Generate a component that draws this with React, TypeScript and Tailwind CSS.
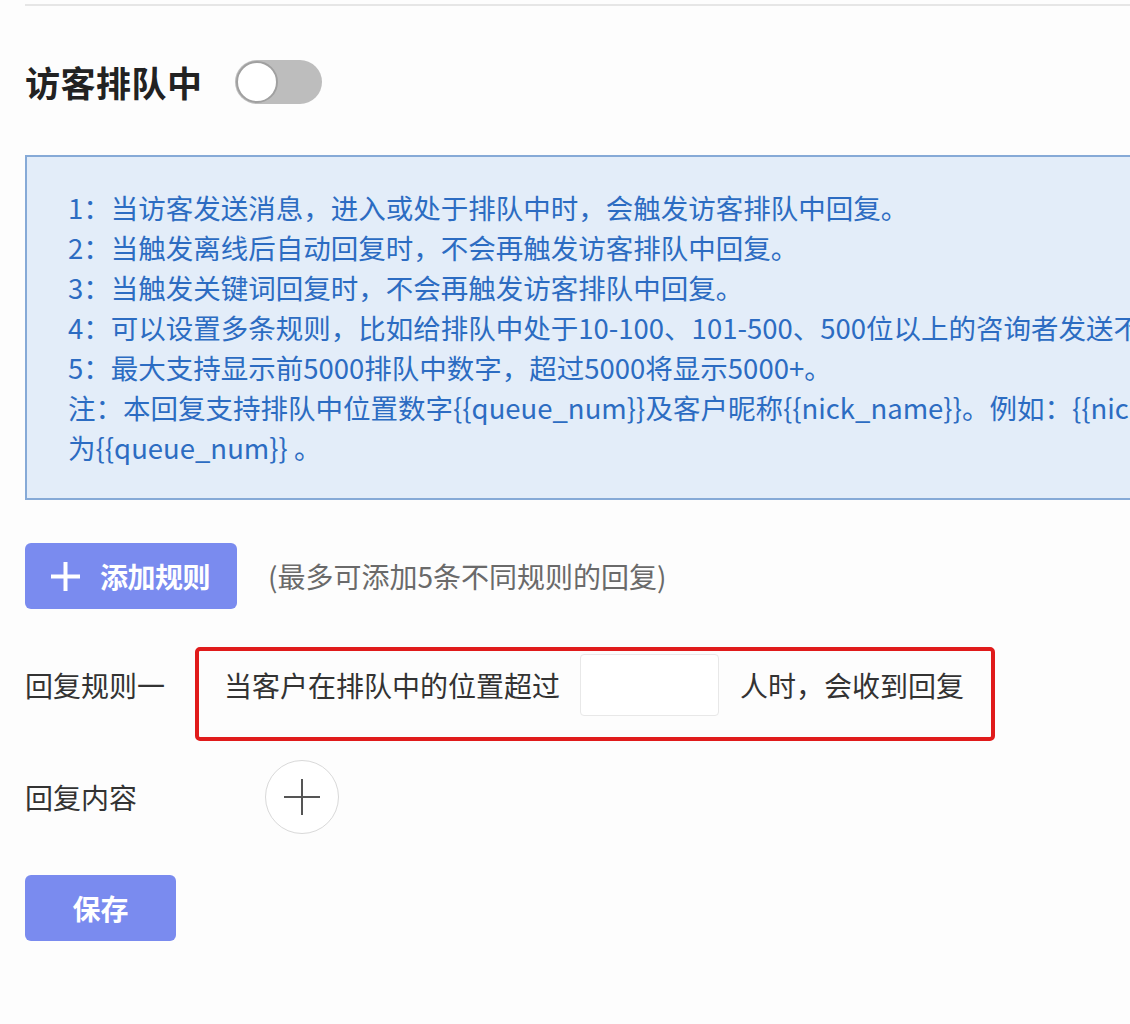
import React from "react";

const font = { fontFamily: '"Noto Sans CJK SC", "Noto Sans", sans-serif' };

export default function App() {
  const lines = [
    "1：当访客发送消息，进入或处于排队中时，会触发访客排队中回复。",
    "2：当触发离线后自动回复时，不会再触发访客排队中回复。",
    "3：当触发关键词回复时，不会再触发访客排队中回复。",
    "4：可以设置多条规则，比如给排队中处于10-100、101-500、500位以上的咨询者发送不同的回复内容。",
    "5：最大支持显示前5000排队中数字，超过5000将显示5000+。",
    "注：本回复支持排队中位置数字{{queue_num}}及客户昵称{{nick_name}}。例如：{{nick_name}}您好，您当前排队位置",
    "为{{queue_num}} 。",
  ];
  return (
    <div
      className="w-[1130px] h-[1024px] overflow-hidden bg-[#fdfdfd]"
      style={font}
    >
      <div className="pl-[25px]">
        <div className="h-[2px] bg-[#e6e6e6] mt-[4px]" />
        <div className="mt-[54px] h-[44px] flex items-center gap-[32px]">
          <div className="text-[35px] font-bold text-[#222] leading-[44px] tracking-[0.5px]">
            访客排队中
          </div>
          <div className="w-[87px] h-[44px] rounded-full bg-[#bdbdbd] flex items-center pl-[1px]">
            <div className="w-[42px] h-[42px] rounded-full bg-white border-[2px] border-[#a0a0a0]" />
          </div>
        </div>

        <div className="mt-[51px] w-[1200px] h-[345px] border-2 border-[#86aad7] bg-[#e3edf9] pt-[30px] pl-[41px]">
          {lines.map((l, i) => (
            <div
              key={i}
              className="whitespace-nowrap text-[27.5px] leading-[40px] text-[#2c6cc2]"
            >
              {l}
            </div>
          ))}
        </div>

        <div className="mt-[43px] flex items-center">
          <button className="w-[212px] h-[66px] rounded-[6px] bg-[#7a8bef] flex items-center pl-[25px] text-white">
            <svg width="31" height="31" viewBox="0 0 31 31">
              <path d="M15.5 1v29M1 15.5h29" stroke="#fff" strokeWidth="4" />
            </svg>
            <span className="ml-[19px] text-[28px] font-bold leading-none tracking-[-0.5px]">
              添加规则
            </span>
          </button>
          <span className="ml-[31px] text-[28px] text-[#6a6a6a] leading-none">
            (最多可添加5条不同规则的回复)
          </span>
        </div>

        <div className="mt-[38px] flex items-start">
          <div className="w-[170px] mt-[7px] h-[62px] leading-[62px] text-[28px] text-[#333] whitespace-nowrap">
            回复规则一
          </div>
          <div className="w-[800px] h-[94px] border-[4px] border-[#e01b1b] rounded-[5px] pt-[3px] pl-[25px]">
            <div className="h-[62px] flex items-center text-[28px] text-[#333] whitespace-nowrap">
              <span>当客户在排队中的位置超过</span>
              <div className="ml-[20px] w-[139px] h-[62px] rounded-[4px] border border-[#e8e8e8] bg-white" />
              <span className="ml-[21px]">人时，会收到回复</span>
            </div>
          </div>
        </div>

        <div className="mt-[19px] flex items-center">
          <div className="w-[240px] text-[28px] text-[#333] whitespace-nowrap">
            回复内容
          </div>
          <div className="w-[74px] h-[74px] rounded-full border border-[#d9d9d9] bg-white flex items-center justify-center">
            <svg width="36" height="36" viewBox="0 0 36 36">
              <path d="M18 0v36M0 18h36" stroke="#555" strokeWidth="2" />
            </svg>
          </div>
        </div>

        <button className="mt-[41px] w-[151px] h-[66px] rounded-[6px] bg-[#7a8bef] text-white text-[28px] font-bold flex items-center justify-center">
          保存
        </button>
      </div>
    </div>
  );
}
